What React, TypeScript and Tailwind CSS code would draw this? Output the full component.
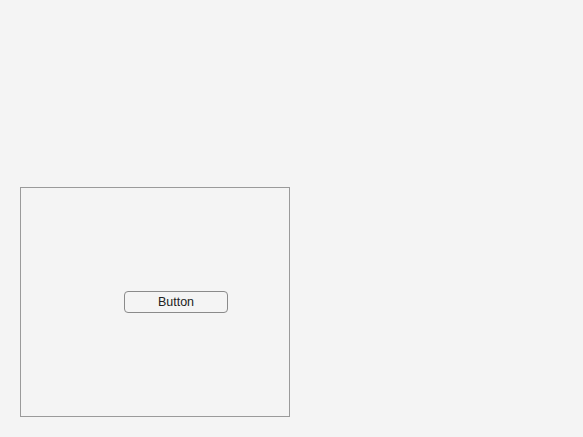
import React from 'react';

const App: React.FC = () => {
  return (
    <div className="min-h-screen w-full bg-[#f4f4f4] pl-5 pt-[187px] font-['Liberation_Sans',Arial,sans-serif]">
      <div className="h-[230px] w-[270px] border border-[#9a9a9a] pl-[103px] pt-[103px]">
        <button className="flex h-[22px] w-[104px] items-center justify-center rounded-[4px] border border-[#8a8a8a] bg-[#f4f4f4] text-[12.5px] text-[#222]">
          Button
        </button>
      </div>
    </div>
  );
};

export default App;
